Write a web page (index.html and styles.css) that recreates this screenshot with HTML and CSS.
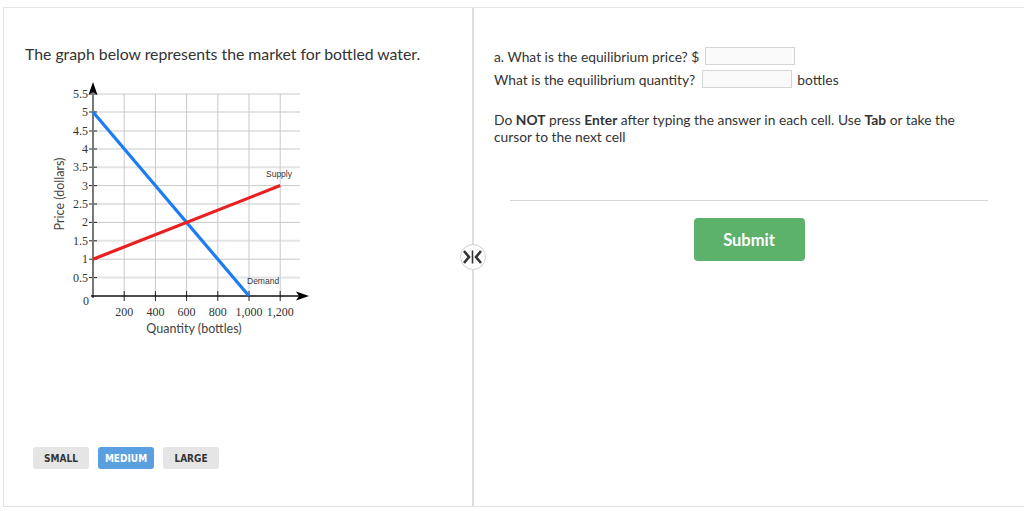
FILE: index.html
```html
<!DOCTYPE html>
<html>
<head>
<meta charset="utf-8">
<link rel="stylesheet" href="styles.css">
</head>
<body>
<div class="frame">
  <section class="left">
    <p class="title">The graph below represents the market for bottled water.</p>
    <svg class="graph" width="280" height="270" viewBox="40 75 280 270">
      <g class="grid-minor">
        <line x1="93" y1="92" x2="300" y2="92"/>
        <line x1="93" y1="129" x2="300" y2="129"/>
        <line x1="93" y1="165.2" x2="300" y2="165.2"/>
        <line x1="93" y1="202" x2="300" y2="202"/>
        <line x1="93" y1="238.8" x2="300" y2="238.8"/>
        <line x1="93" y1="275.6" x2="300" y2="275.6"/>
      </g>
      <g class="grid-major">
        <line x1="93" y1="110" x2="300" y2="110"/>
        <line x1="93" y1="147" x2="300" y2="147"/>
        <line x1="93" y1="183.6" x2="300" y2="183.6"/>
        <line x1="93" y1="220.4" x2="300" y2="220.4"/>
        <line x1="93" y1="257.2" x2="300" y2="257.2"/>
        <line x1="124.2" y1="92" x2="124.2" y2="294"/>
        <line x1="155.4" y1="92" x2="155.4" y2="294"/>
        <line x1="186.6" y1="92" x2="186.6" y2="294"/>
        <line x1="217.8" y1="92" x2="217.8" y2="294"/>
        <line x1="249" y1="92" x2="249" y2="294"/>
        <line x1="280.2" y1="92" x2="280.2" y2="294"/>
      </g>
      <g class="ticks">
        <line x1="89" y1="92" x2="97" y2="92"/>
        <line x1="89" y1="110" x2="97" y2="110"/>
        <line x1="89" y1="129" x2="97" y2="129"/>
        <line x1="89" y1="147" x2="97" y2="147"/>
        <line x1="89" y1="165.2" x2="97" y2="165.2"/>
        <line x1="89" y1="183.6" x2="97" y2="183.6"/>
        <line x1="89" y1="202" x2="97" y2="202"/>
        <line x1="89" y1="220.4" x2="97" y2="220.4"/>
        <line x1="89" y1="238.8" x2="97" y2="238.8"/>
        <line x1="89" y1="257.2" x2="97" y2="257.2"/>
        <line x1="89" y1="275.6" x2="97" y2="275.6"/>
        <line x1="124.2" y1="289" x2="124.2" y2="299"/>
        <line x1="155.4" y1="289" x2="155.4" y2="299"/>
        <line x1="186.6" y1="289" x2="186.6" y2="299"/>
        <line x1="217.8" y1="289" x2="217.8" y2="299"/>
        <line x1="249" y1="289" x2="249" y2="299"/>
        <line x1="280.2" y1="289" x2="280.2" y2="299"/>
      </g>
      <line class="yaxis" x1="93" y1="86" x2="93" y2="296"/>
      <polygon class="arrow" points="93,80 88.5,93 93,90 97.5,93"/>
      <line class="xaxis" x1="91" y1="294" x2="302" y2="294"/>
      <polygon class="arrow" points="309,294 296,289.5 299,294 296,298.5"/>
      <line class="demand" x1="93" y1="110" x2="249" y2="294"/>
      <line class="supply" x1="93" y1="257.2" x2="280.2" y2="183.6"/>
      <g class="ylab">
        <text x="88" y="96">5.5</text>
        <text x="88" y="114">5</text>
        <text x="88" y="133">4.5</text>
        <text x="88" y="151">4</text>
        <text x="88" y="169">3.5</text>
        <text x="88" y="188">3</text>
        <text x="88" y="206">2.5</text>
        <text x="88" y="224">2</text>
        <text x="88" y="243">1.5</text>
        <text x="88" y="261">1</text>
        <text x="88" y="280">0.5</text>
        <text x="89" y="303">0</text>
      </g>
      <g class="xlab">
        <text x="124.2" y="314">200</text>
        <text x="155.4" y="314">400</text>
        <text x="186.6" y="314">600</text>
        <text x="217.8" y="314">800</text>
        <text x="249" y="314">1,000</text>
        <text x="280.2" y="314">1,200</text>
      </g>
      <text class="curve-label" x="266" y="175">Supply</text>
      <text class="curve-label" x="247" y="282">Demand</text>
      <text class="axis-title" x="194" y="331" text-anchor="middle">Quantity (bottles)</text>
      <text class="axis-title" transform="translate(64 192) rotate(-90)" text-anchor="middle">Price (dollars)</text>
    </svg>
    <div class="sizes">
      <button class="size">SMALL</button>
      <button class="size active">MEDIUM</button>
      <button class="size">LARGE</button>
    </div>
  </section>
  <div class="divider">
    <span class="handle">
      <svg width="26" height="26" viewBox="0 0 26 26">
        <path d="M4 7 L9 13 L4 19" class="chev"/>
        <path d="M21 7 L16 13 L21 19" class="chev"/>
        <line x1="12.5" y1="6.5" x2="12.5" y2="19.5" class="bar"/>
      </svg>
    </span>
  </div>
  <section class="right">
    <div class="row first">
      <span>a. What is the equilibrium price? $</span>
      <span class="input in1"></span>
    </div>
    <div class="row">
      <span>What is the equilibrium quantity?</span>
      <span class="input in2"></span>
      <span>bottles</span>
    </div>
    <p class="note">Do <b>NOT</b> press <b>Enter</b> after typing the answer in each cell. Use <b>Tab</b> or take the cursor to the next cell</p>
    <hr class="rule">
    <div class="actions"><button class="submit">Submit</button></div>
  </section>
</div>
</body>
</html>
```
FILE: styles.css
```css
html, body {
  margin: 0;
  padding: 0;
  background: #fff;
  overflow: hidden;
}
body {
  font-family: "Lato", "Liberation Sans", sans-serif;
  color: #333;
}
.frame {
  margin: 7px 0 0 3px;
  width: 1030px;
  height: 498px;
  border: 1px solid #e3e3e3;
  display: flex;
}
.left {
  width: 468px;
  padding: 0 0 0 21px;
  box-sizing: border-box;
  display: flex;
  flex-direction: column;
}
.title {
  margin: 36px 0 0 0;
  font-size: 15.8px;
  line-height: 20px;
  color: #333;
}
.graph {
  display: block;
  margin: 13px 0 0 15px;
}
.grid-minor line { stroke: #e4e4e4; stroke-width: 2; }
.grid-major line { stroke: #c9c9c9; stroke-width: 1; }
.ticks line { stroke: #222; stroke-width: 1; }
.yaxis { stroke: #777; stroke-width: 2; }
.xaxis { stroke: #111; stroke-width: 1.5; }
.arrow { fill: #000; }
.demand { stroke: #1c7cf4; stroke-width: 3.2; }
.supply { stroke: #ea1f1f; stroke-width: 3.2; }
.ylab text {
  font-family: "Liberation Serif", serif;
  font-size: 12px;
  fill: #333;
  text-anchor: end;
}
.xlab text {
  font-family: "Liberation Serif", serif;
  font-size: 12px;
  fill: #333;
  text-anchor: middle;
}
.curve-label {
  font-family: "Liberation Sans", sans-serif;
  font-size: 8.5px;
  fill: #333;
}
.axis-title {
  font-family: "Lato", "Liberation Sans", sans-serif;
  font-size: 12.5px;
  fill: #444;
}
.sizes {
  display: flex;
  gap: 9px;
  margin: 100px 0 0 8px;
}
.size {
  width: 56px;
  height: 22px;
  border: none;
  border-radius: 3px;
  background: #e5e5e5;
  color: #333;
  font-family: "DejaVu Sans Condensed", "Liberation Sans Narrow", "Liberation Sans", sans-serif;
  font-stretch: condensed;
  font-weight: bold;
  font-size: 10px;
  padding: 0;
}
.size.active {
  background: #5a9fe0;
  color: #fff;
}
.divider {
  width: 2px;
  background: #dedede;
  position: relative;
}
.handle {
  position: absolute;
  left: -12px;
  top: 236px;
  width: 26px;
  height: 26px;
  border-radius: 50%;
  background: #fff;
  border: 1.5px solid #d0d0d0;
  box-sizing: border-box;
}
.handle svg { display: block; margin: -1.5px 0 0 -1.5px; }
.chev { fill: none; stroke: #333; stroke-width: 2.6; }
.bar { stroke: #333; stroke-width: 1.6; }
.right {
  flex: 1;
  padding: 38px 0 0 20px;
  font-size: 13.8px;
  color: #333;
}
.row {
  display: flex;
  align-items: center;
  height: 20px;
  margin-bottom: 2px;
}
.row.first { margin-bottom: 3px; }
.input {
  display: inline-block;
  height: 18px;
  border: 1px solid #d5d5d5;
  background: #fafafa;
  box-sizing: border-box;
}
.in1 { width: 90px; margin-left: 6px; }
.in2 { width: 90px; margin-left: 7px; margin-right: 5px; }
.note {
  margin: 22px 0 0 0;
  width: 480px;
  line-height: 17px;
}
.note b { font-weight: bold; }
.rule {
  width: 478px;
  margin: 55px 0 0 16px;
  border: none;
  border-top: 1px solid #d6d6d6;
}
.actions {
  width: 510px;
  display: flex;
  justify-content: center;
  margin-top: 17px;
}
.submit {
  width: 111px;
  height: 43px;
  border: none;
  border-radius: 4px;
  background: #5cb16b;
  color: #fff;
  font-family: "Lato", "Liberation Sans", sans-serif;
  font-weight: bold;
  font-size: 16.5px;
}
```
